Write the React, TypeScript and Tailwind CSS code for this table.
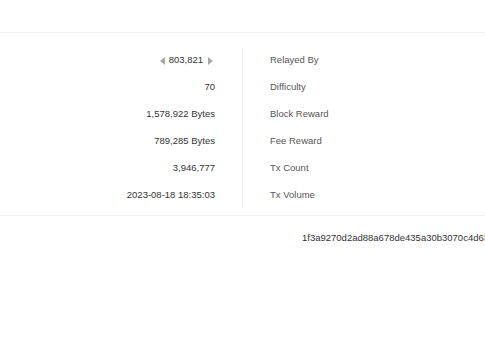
const rows: { value: string; label: string; nav?: boolean }[] = [
  { value: "803,821", label: "Relayed By", nav: true },
  { value: "70", label: "Difficulty" },
  { value: "1,578,922 Bytes", label: "Block Reward" },
  { value: "789,285 Bytes", label: "Fee Reward" },
  { value: "3,946,777", label: "Tx Count" },
  { value: "2023-08-18 18:35:03", label: "Tx Volume" },
]

function Caret({ dir }: { dir: "left" | "right" }) {
  return (
    <svg width="5" height="8" viewBox="0 0 5 8" className="text-[#a8a8a8]">
      {dir === "left" ? (
        <polygon points="5,0 5,8 0,4" fill="currentColor" />
      ) : (
        <polygon points="0,0 0,8 5,4" fill="currentColor" />
      )}
    </svg>
  )
}

export default function App() {
  return (
    <div
      className="w-[485px] h-[360px] overflow-hidden bg-white text-[9.5px] text-[#333]"
      style={{ fontFamily: '"Liberation Sans", Arial, sans-serif' }}
    >
      <div className="h-[33px] border-b border-[#f0f0f0]" />

      <div className="flex pt-[14px] pb-[6px] border-b border-[#f0f0f0]">
        <div className="w-[243px] pr-[27px] border-r border-[#f3f3f3]">
          {rows.map((r) => (
            <div key={r.value} className="h-[27px] flex items-center justify-end">
              {r.nav && (
                <span className="mr-[4px] flex">
                  <Caret dir="left" />
                </span>
              )}
              <span>{r.value}</span>
              {r.nav && (
                <span className="ml-[5px] mr-[2px] flex">
                  <Caret dir="right" />
                </span>
              )}
            </div>
          ))}
        </div>
        <div className="pl-[27px]">
          {rows.map((r) => (
            <div key={r.label} className="h-[27px] flex items-center text-[#555]">
              {r.label}
            </div>
          ))}
        </div>
      </div>

      <div className="h-[44px] flex items-center pl-[302px] whitespace-nowrap">
        1f3a9270d2ad88a678de435a30b3070c4d6393c0f7a1e2b5d8c4e91a0b2c3d4e
      </div>
    </div>
  )
}
